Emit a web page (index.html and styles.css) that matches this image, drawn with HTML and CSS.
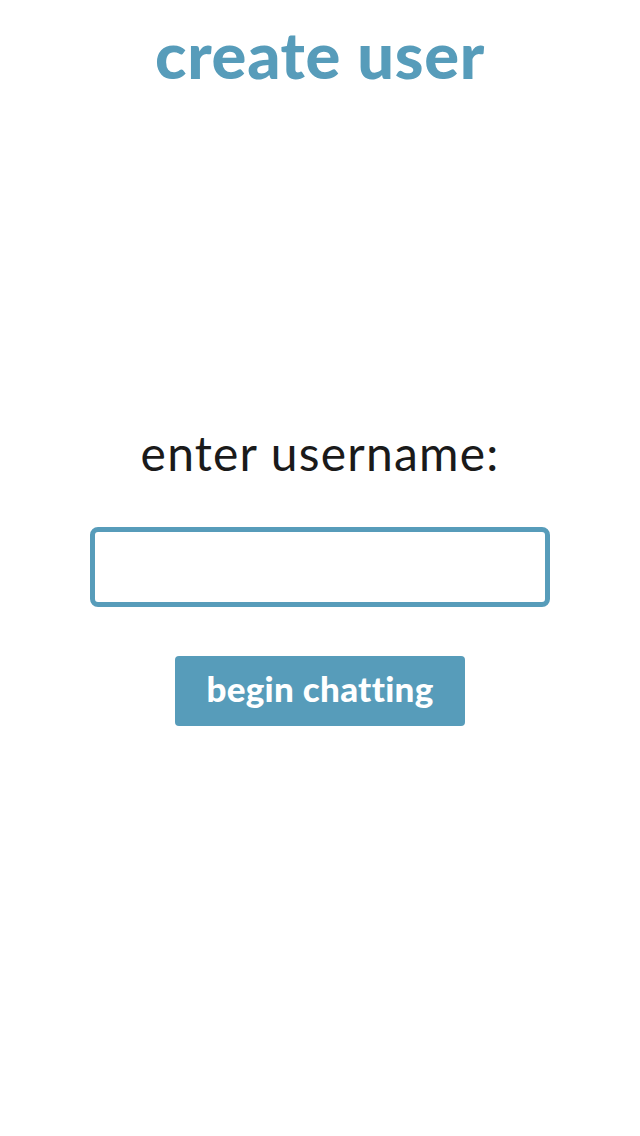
FILE: index.html
```html
<!DOCTYPE html>
<html lang="en">
<head>
<meta charset="utf-8">
<title>create user</title>
<link rel="stylesheet" href="styles.css">
</head>
<body>
<main class="page">
  <h1 class="title">create user</h1>
  <form class="form">
    <label class="label" for="username">enter username:</label>
    <input class="input" id="username" type="text">
    <button class="button" type="button">begin chatting</button>
  </form>
</main>
</body>
</html>
```

FILE: styles.css
```css
html, body {
  margin: 0;
  padding: 0;
  background: #ffffff;
}

body {
  font-family: Lato, "Noto Sans", "Liberation Sans", sans-serif;
  color: #1a1a1a;
}

.page {
  display: flex;
  flex-direction: column;
  align-items: center;
  width: 640px;
  min-height: 1136px;
}

.title {
  margin: 15px 0 0;
  font-size: 65px;
  font-weight: 900;
  line-height: 1.2;
  color: #579cba;
  letter-spacing: 0.7px;
}

.form {
  display: flex;
  flex-direction: column;
  align-items: center;
  margin-top: 331px;
}

.label {
  font-size: 48px;
  font-weight: 400;
  line-height: 1.2;
  letter-spacing: 1.2px;
  color: #1a1a1a;
}

.input {
  box-sizing: border-box;
  width: 460px;
  height: 80px;
  margin-top: 45px;
  border: 5px solid #579cba;
  border-radius: 8px;
  background: #ffffff;
  outline: none;
  padding: 0 12px;
  font-family: inherit;
  font-size: 32px;
}

.button {
  box-sizing: border-box;
  display: flex;
  align-items: center;
  justify-content: center;
  width: 290px;
  height: 70px;
  margin-top: 49px;
  padding: 0 0 6px;
  border: none;
  border-radius: 4px;
  background: #579cba;
  color: #ffffff;
  font-family: inherit;
  font-size: 35px;
  font-weight: 900;
  line-height: 1.2;
  letter-spacing: 0.3px;
  cursor: pointer;
}
```
